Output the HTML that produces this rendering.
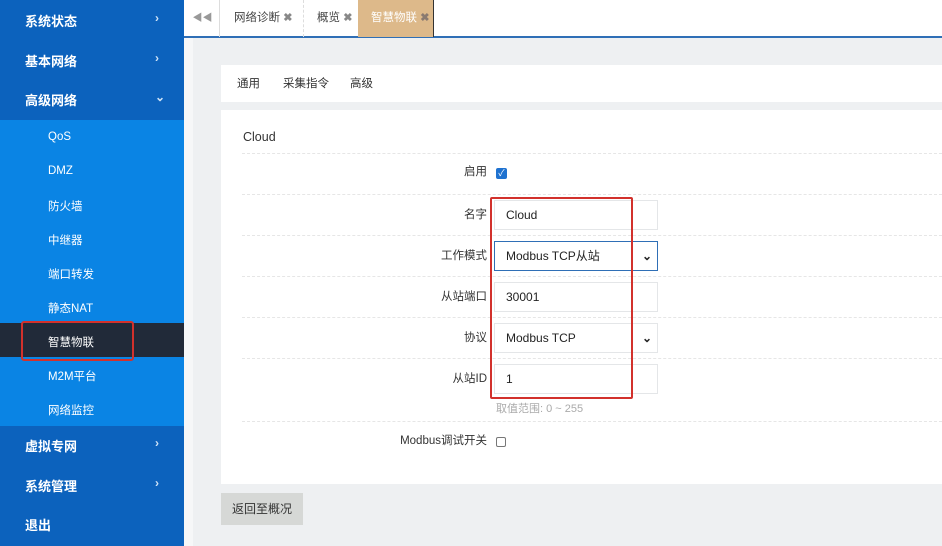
<!DOCTYPE html><html><head><meta charset="utf-8"><style>
*{margin:0;padding:0;box-sizing:border-box}
body{width:942px;height:546px;overflow:hidden;position:relative;background:#eef0f2;font-family:"Liberation Sans","Noto Sans CJK SC",sans-serif;font-size:12px;color:#333}
.sb{position:absolute;left:0;top:0;width:184px;height:546px;background:#0c62bd}
.m{position:absolute;left:25px;color:#fff;font-weight:bold;font-size:13px}
.ar{position:absolute;left:155px;color:#cfe3f7;font-size:12px;font-weight:bold}
.sub{position:absolute;left:0;top:120px;width:184px;height:306px;background:#0a84e4}
.s{position:absolute;left:48px;color:#fff;font-size:11.5px}
.act{position:absolute;left:0;top:323px;width:184px;height:34px;background:#212a39}
.top{position:absolute;left:184px;top:0;width:758px;height:38px;background:#fff;border-bottom:2px solid #2f6fb6}
.tab{position:absolute;top:0;height:37px;line-height:37px;font-size:11.5px;color:#444}
.x{color:#888;font-weight:bold;font-size:11px}
.pan{position:absolute;left:221px;width:721px;background:#fff}
.lbl{position:absolute;right:455px;font-size:11.5px;color:#333;text-align:right}
.inp{position:absolute;left:494px;width:164px;height:30px;border:1px solid #e4e6e8;background:#fff;padding-left:11px;line-height:28px;font-size:12px;color:#222}
.sep{position:absolute;left:242px;width:700px;border-top:1px dashed #e6e6e6}
</style></head><body>
<div class="sb"></div>
<div class="m" style="top:11px">系统状态</div><div class="ar" style="top:11px">›</div>
<div class="m" style="top:51px">基本网络</div><div class="ar" style="top:51px">›</div>
<div class="m" style="top:90px">高级网络</div><div class="ar" style="top:90px">⌄</div>
<div class="sub"></div>
<div class="act"></div>
<div class="s" style="top:131px">QoS</div>
<div class="s" style="top:165px">DMZ</div>
<div class="s" style="top:198px">防火墙</div>
<div class="s" style="top:232px">中继器</div>
<div class="s" style="top:266px">端口转发</div>
<div class="s" style="top:300px">静态NAT</div>
<div class="s" style="top:334px">智慧物联</div>
<div class="s" style="top:368px">M2M平台</div>
<div class="s" style="top:402px">网络监控</div>
<div style="position:absolute;left:21px;top:321px;width:113px;height:40px;border:2px solid #d2312c;border-radius:3px"></div>
<div class="m" style="top:436px">虚拟专网</div><div class="ar" style="top:436px">›</div>
<div class="m" style="top:476px">系统管理</div><div class="ar" style="top:476px">›</div>
<div class="m" style="top:515px">退出</div>
<div style="position:absolute;left:184px;top:38px;width:9px;height:508px;background:#f6f7f8"></div>
<div class="top"></div>
<div class="tab" style="left:186px;width:34px;border-right:1px solid #ddd;text-align:center;color:#999;font-size:10px">◀◀</div>
<div class="tab" style="left:222px;width:82px;border-right:1px dashed #ddd;padding-left:12px">网络诊断 <span class="x">✖</span></div>
<div class="tab" style="left:305px;width:53px;padding-left:12px">概览 <span class="x">✖</span></div>
<div class="tab" style="left:358px;width:76px;background:#ddb98a;color:#fff;padding-left:13px;border-right:1px solid #333">智慧物联 <span class="x" style="color:#8a7a70">✖</span></div>
<div class="pan" style="top:65px;height:37px"></div>
<div style="position:absolute;left:237px;top:75px;font-size:11.5px">通用</div>
<div style="position:absolute;left:283px;top:75px;font-size:11.5px">采集指令</div>
<div style="position:absolute;left:350px;top:75px;font-size:11.5px">高级</div>
<div class="pan" style="top:110px;height:374px"></div>
<div style="position:absolute;left:243px;top:130px;font-size:12.5px;color:#333">Cloud</div>
<div class="sep" style="top:153px"></div>
<div class="sep" style="top:194px"></div>
<div class="sep" style="top:235px"></div>
<div class="sep" style="top:276px"></div>
<div class="sep" style="top:317px"></div>
<div class="sep" style="top:358px"></div>
<div class="sep" style="top:421px"></div>
<div class="lbl" style="top:163px">启用</div>
<div style="position:absolute;left:496px;top:168px;width:11px;height:11px;background:#1f72d0;border-radius:2px;color:#fff;font-size:9px;line-height:11px;text-align:center">✓</div>
<div class="lbl" style="top:206px">名字</div>
<div class="inp" style="top:200px">Cloud</div>
<div class="lbl" style="top:247px">工作模式</div>
<div class="inp" style="top:241px;border-color:#2f6fb6">Modbus TCP从站<span style="position:absolute;right:5px;font-weight:bold">⌄</span></div>
<div class="lbl" style="top:288px">从站端口</div>
<div class="inp" style="top:282px">30001</div>
<div class="lbl" style="top:329px">协议</div>
<div class="inp" style="top:323px">Modbus TCP<span style="position:absolute;right:5px;font-weight:bold">⌄</span></div>
<div class="lbl" style="top:370px">从站ID</div>
<div class="inp" style="top:364px">1</div>
<div style="position:absolute;left:496px;top:400px;font-size:11px;color:#aaa">取值范围: 0 ~ 255</div>
<div class="lbl" style="top:432px">Modbus调试开关</div>
<div style="position:absolute;left:496px;top:437px;width:10px;height:10px;border:1px solid #777;border-radius:2px"></div>
<div style="position:absolute;left:490px;top:197px;width:143px;height:202px;border:2px solid #d2312c;border-radius:2px"></div>
<div style="position:absolute;left:221px;top:493px;width:82px;height:32px;background:#d6d8d6;line-height:32px;text-align:center;font-size:12px;color:#333">返回至概况</div>
</body></html>
